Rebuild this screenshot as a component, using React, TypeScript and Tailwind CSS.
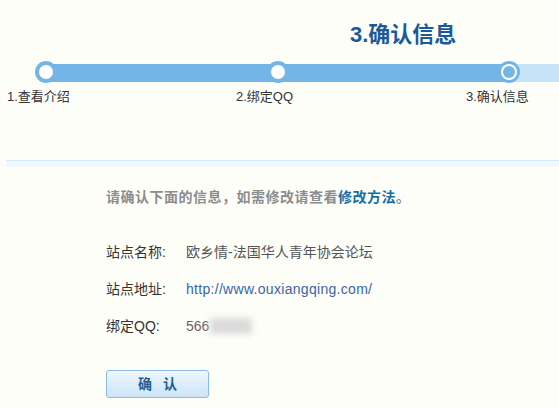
import React from "react";

const FONT = "font-['Liberation_Sans','Noto_Sans_CJK_SC',sans-serif]";

function Ring() {
  return (
    <div className="relative -mt-[3px] h-[22px] w-[22px] shrink-0 rounded-full border-[4px] border-[#74b5e8] bg-white" />
  );
}

function ActiveRing() {
  return (
    <div className="-mt-[3px] -mr-[11px] flex h-[22px] w-[22px] shrink-0 items-center justify-center rounded-full bg-[#74b5e8]">
      <div className="flex h-[16px] w-[16px] items-center justify-center rounded-full bg-white">
        <div className="h-[12px] w-[12px] rounded-full bg-[#74b5e8]" />
      </div>
    </div>
  );
}

function Row({ label, children }: { label: string; children: React.ReactNode }) {
  return (
    <div className="flex h-[20px] items-center text-[14px] leading-[20px]">
      <span className="w-[80px] text-[#333]">{label}</span>
      {children}
    </div>
  );
}

export default function App() {
  return (
    <div className={`${FONT} h-[408px] w-[559px] overflow-hidden bg-[#fefef9]`}>
      {/* step title */}
      <div className="pl-[350px] pt-[20px] text-[22px] font-bold leading-[30px] text-[#1b5a9a]">
        3.确认信息
      </div>

      {/* progress bar */}
      <div className="mt-[14px] ml-[46px] flex h-[18px] bg-[#c5e4f7]">
        <div className="flex h-full w-[463px] items-start justify-between bg-[#74b5e8]">
          <div className="-ml-[11px]">
            <Ring />
          </div>
          <Ring />
          <ActiveRing />
        </div>
      </div>

      {/* step labels */}
      <div className="mt-[6px] flex pl-[7px] text-[13px] leading-[18px] text-[#333]">
        <span className="w-[229px]">1.查看介绍</span>
        <span className="w-[230px]">2.绑定QQ</span>
        <span>3.确认信息</span>
      </div>

      {/* separator */}
      <div className="mt-[54px] ml-[6px] h-[7px] border-t border-[#d4eafb] bg-[#f2f9fe]" />

      {/* content */}
      <div className="pl-[106px]">
        <p className="mt-[20px] text-[14px] font-bold leading-[20px] tracking-[0.5px] text-[#8c8c8c]">
          请确认下面的信息，如需修改请查看<span className="text-[#146ea6]">修改方法</span>。
        </p>

        <div className="mt-[35px] flex flex-col gap-[17px]">
          <Row label="站点名称:">
            <span className="text-[#555]">欧乡情-法国华人青年协会论坛</span>
          </Row>
          <Row label="站点地址:">
            <span className="tracking-[0.3px] text-[#3a64a8]">http://www.ouxiangqing.com/</span>
          </Row>
          <Row label="绑定QQ:">
            <span className="text-[#666]">566</span>
            <span className="ml-[1px] h-[16px] w-[42px] bg-[#dadada] blur-[3px]" />
          </Row>
        </div>

        <button className="mt-[34px] flex h-[28px] w-[103px] items-center justify-center gap-[11px] rounded-[3px] border border-[#8cbce6] bg-gradient-to-b from-[#eef7fe] to-[#cde4f7] text-[14px] font-bold text-[#1d5f95]">
          <span>确</span>
          <span>认</span>
        </button>
      </div>
    </div>
  );
}
